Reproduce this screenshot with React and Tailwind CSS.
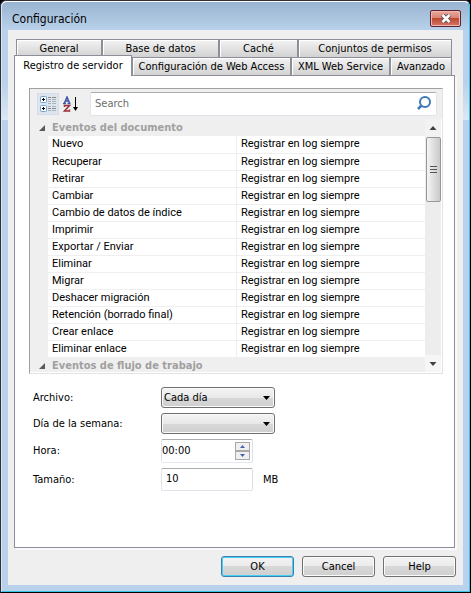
import { useState } from "react";

const TOP_TABS = ["General", "Base de datos", "Caché", "Conjuntos de permisos"];
const BOTTOM_TABS = ["Configuración de Web Access", "XML Web Service", "Avanzado"];

const EVENTS = [
  "Nuevo",
  "Recuperar",
  "Retirar",
  "Cambiar",
  "Cambio de datos de índice",
  "Imprimir",
  "Exportar / Enviar",
  "Eliminar",
  "Migrar",
  "Deshacer migración",
  "Retención (borrado final)",
  "Crear enlace",
  "Eliminar enlace",
];

function Tab({ children }) {
  return (
    <button
      type="button"
      role="tab"
      aria-selected="false"
      className="h-[18px] overflow-hidden whitespace-nowrap border-t border-r border-l border-[#8c8e98] bg-gradient-to-b from-[#f3f3f3] to-[#d2d2d2] text-center leading-[18px] shadow-[inset_1px_1px_0_#ffffff]"
    >
      {children}
    </button>
  );
}

function Category({ children }) {
  return (
    <tr className="h-[17px] bg-[#efefef]">
      <td className="p-0">
        <svg className="ml-2 h-2 w-2" viewBox="0 0 8 8">
          <path d="M7 1v6H1z" fill="#5a5a5a" />
        </svg>
      </td>
      <th
        colSpan={2}
        className="p-0 pl-1 text-left font-['DejaVu_Sans_Condensed',sans-serif] text-[11px] font-bold leading-4 text-[#a0a0a0]"
      >
        {children}
      </th>
    </tr>
  );
}

function DropDown({ id, children }) {
  return (
    <div className="relative w-[114px]">
      <select
        id={id}
        className="block h-[21px] w-full appearance-none rounded-[3px] border border-[#707070] bg-[linear-gradient(#f4f4f4,#e8e8e8_50%,#d8d8d8_50%,#cfcfcf)] pl-0.5 leading-4 shadow-[inset_0_0_0_1px_#fbfbfb]"
      >
        {children}
      </select>
      <svg className="pointer-events-none absolute top-[9px] right-[5px] h-1 w-[7px]" viewBox="0 0 7 4">
        <path d="M0 0h7L3.500 4z" fill="#000" />
      </svg>
    </div>
  );
}

function PushButton({ primary, children }) {
  return (
    <button
      type="button"
      className={`h-[21px] w-[73px] rounded-[3px] border bg-[linear-gradient(#f3f3f3,#ebebeb_50%,#d8d8d8_50%,#cfcfcf)] leading-4 ${
        primary
          ? "border-[#3c7fb1] shadow-[inset_0_0_0_1px_#46d0f5]"
          : "border-[#707070] shadow-[inset_0_0_0_1px_#fbfbfb]"
      }`}
    >
      {children}
    </button>
  );
}

export default function App() {
  const [search, setSearch] = useState("");
  const [time, setTime] = useState("00:00");
  const [size, setSize] = useState("10");

  return (
    <div className="min-h-screen bg-black font-['DejaVu_Sans_Condensed',sans-serif] text-[11px] text-black">
      <div className="flex min-h-screen flex-col rounded-t-md border border-t-[#30303a] border-r-black border-b-black border-l-[#30303a] bg-[#b9d1ea]">
        <div className="flex min-h-0 flex-1 flex-col rounded-t-md border-t border-r border-b border-l border-t-white border-r-[#35c7e8] border-b-[#35c7e8] border-l-[#d8e6f5] bg-[linear-gradient(#99b4d1,#b9d1ea_28px,#b9d1ea_80px,#dbe8f6_118px,#b9d1ea_118px)] px-1.5 pb-1.5">
          {/* Title bar */}
          <header className="flex h-7 items-center justify-between pt-1.5 pr-0.5 pl-1">
            <h1 className="text-[12px] leading-4">Configuración</h1>
            <button
              type="button"
              aria-label="Close"
              className="mb-0.5 flex h-[17px] w-[31px] items-center justify-center rounded-[2px] border border-[#5a2230] bg-[linear-gradient(#e8a99d,#d98475_45%,#bd4a30_50%,#d0766a)] shadow-[inset_0_0_0_1px_#f0b8b0]"
            >
              <svg className="h-[9px] w-3" viewBox="0 0 12 9">
                <path d="M2.500 1l7 7M9.500 1l-7 7" stroke="#5b5560" strokeWidth="4.500" />
                <path d="M2.500 1l7 7M9.500 1l-7 7" stroke="#fff" strokeWidth="2.500" />
              </svg>
            </button>
          </header>

          <main className="flex flex-1 flex-col bg-[#efefef] pt-[9px] pr-2 pb-2 pl-1.5">
            <div role="tablist" className="pr-[3px]">
              <div className="grid grid-cols-[86fr_117fr_79fr_154fr] pl-0.5">
                {TOP_TABS.map((t) => (
                  <Tab key={t}>{t}</Tab>
                ))}
              </div>
              <div className="grid grid-cols-[118fr_159fr_99fr_62fr]">
                <button
                  type="button"
                  role="tab"
                  aria-selected="true"
                  className="relative -mt-0.5 -mb-px whitespace-nowrap border-t border-r border-l border-[#8c8e98] bg-white leading-4"
                >
                  Registro de servidor
                </button>
                {BOTTOM_TABS.map((t) => (
                  <Tab key={t}>{t}</Tab>
                ))}
              </div>
            </div>

            <section className="flex-1 border border-[#8c8e98] bg-white pt-3 pr-[11px] pl-[14px] shadow-[2px_2px_0_#fafafa]">
              <div className="border border-t-[#a0a0a0] border-r-[#e3e3e3] border-b-[#e3e3e3] border-l-[#a0a0a0] bg-[#efefef]">
                <div className="flex h-[30px] items-center gap-1 pr-[5px] pl-[7px]">
                  <button
                    type="button"
                    aria-label="Categorized"
                    className="flex h-[22px] w-[22px] items-center justify-center border border-[#d5dde8] bg-[#dce4ee]"
                  >
                    <svg className="h-[18px] w-[18px]" viewBox="0 0 18 18">
                      <g fill="#fff" stroke="#6fa3d0">
                        <rect x="1.500" y="1.500" width="6" height="6" rx="1" />
                        <rect x="1.500" y="10.500" width="6" height="6" rx="1" />
                      </g>
                      <path d="M3 4.500h3M4.500 3v3M3 13.500h3M4.500 12v3" stroke="#000" />
                      <path d="M9 2.500h3M13 2.500h4M9 13.500h3M13 13.500h4" stroke="#888" />
                      <path
                        d="M9 4.500h3M13 4.500h4M9 6.500h3M13 6.500h4M9 8.500h3M13 8.500h4M9 11.500h3M13 11.500h4M9 15.500h3M13 15.500h4"
                        stroke="#a9b1bb"
                      />
                    </svg>
                  </button>
                  <button
                    type="button"
                    aria-label="Alphabetical"
                    className="flex h-[22px] w-[22px] items-center justify-start"
                  >
                    <svg className="h-4 w-4" viewBox="0 0 16 16">
                      <path d="M0 7.500h3M4.500 7.500h3M1.500 7L4 1l2.500 6M2.500 5h3" stroke="#3f56a0" strokeWidth="1.500" fill="none" />
                      <path d="M1.500 11V9.500h5L1.500 15h5v-1.500" stroke="#9c2f38" strokeWidth="1.500" fill="none" />
                      <path d="M12.500 1v13" stroke="#000" />
                      <path d="M10 11h5l-2.500 4z" fill="#000" />
                    </svg>
                  </button>
                  <label className="ml-px flex h-6 flex-1 items-center rounded-[2px] border border-t-[#abadb3] border-r-[#e2e3ea] border-b-[#e2e3ea] border-l-[#e2e3ea] bg-white pr-1 pl-1">
                    <input
                      type="text"
                      aria-label="Search"
                      placeholder="Search"
                      value={search}
                      onChange={(e) => setSearch(e.target.value)}
                      className="min-w-0 flex-1 text-[11px] leading-4 outline-none placeholder:text-[#6d6d6d]"
                    />
                    <svg className="h-4 w-4" viewBox="0 0 16 16" fill="none" stroke="#3f78b8">
                      <circle cx="9" cy="6" r="5" strokeWidth="2" />
                      <path d="M5.500 9.500L2 13" strokeWidth="2.500" />
                    </svg>
                  </label>
                </div>

                <div className="flex h-[254px] border-r border-b border-white">
                  <div className="min-w-0 flex-1 overflow-hidden">
                    <table className="w-full table-fixed border-collapse font-[Roboto,sans-serif] text-[11px] leading-4">
                      <colgroup>
                        <col className="w-[18px]" />
                        <col />
                        <col />
                      </colgroup>
                      <tbody>
                        <Category>Eventos del documento</Category>
                        {EVENTS.map((name) => (
                          <tr key={name} className="h-[17px]">
                            <td className="bg-[#efefef] p-0" />
                            <td className="whitespace-nowrap border-r border-b border-[#efefef] bg-white p-0 pl-1">
                              {name}
                            </td>
                            <td className="whitespace-nowrap border-b border-[#efefef] bg-white p-0 pl-1">
                              Registrar en log siempre
                            </td>
                          </tr>
                        ))}
                        <Category>Eventos de flujo de trabajo</Category>
                      </tbody>
                    </table>
                  </div>
                  {/* Scroll bar */}
                  <div className="flex w-4 flex-col items-center bg-[#ededed]">
                    <svg className="h-[18px] w-4 bg-[#f2f2f2]" viewBox="0 0 16 18">
                      <path d="M8 7l3.500 4h-7z" fill="#404040" />
                    </svg>
                    <div className="flex h-[65px] w-[15px] items-center justify-center rounded-[2px] border border-[#979797] bg-gradient-to-r from-[#f5f5f5] to-[#c9c9c9]">
                      <svg className="h-2 w-[7px]" viewBox="0 0 7 8">
                        <path d="M0 .5h7M0 3.500h7M0 6.500h7" stroke="#555" />
                      </svg>
                    </div>
                    <svg className="mt-auto h-[17px] w-4 bg-[#f6f6f6]" viewBox="0 0 16 17">
                      <path d="M8 11L4.500 7h7z" fill="#404040" />
                    </svg>
                  </div>
                </div>
              </div>

              <form className="grid grid-cols-[128px_1fr] items-center gap-y-[5px] pt-[13px] pl-1 leading-4">
                <label htmlFor="archive">Archivo:</label>
                <DropDown id="archive">
                  <option>Cada día</option>
                </DropDown>

                <label htmlFor="weekday">Día de la semana:</label>
                <DropDown id="weekday">
                  <option></option>
                </DropDown>

                <label htmlFor="time">Hora:</label>
                <div className="flex h-6 w-[92px] items-center rounded-[2px] border border-t-[#abadb3] border-r-[#dbdfe6] border-b-[#e3e9ef] border-l-[#e2e3ea] pr-0.5">
                  <input
                    id="time"
                    value={time}
                    onChange={(e) => setTime(e.target.value)}
                    className="min-w-0 flex-1 leading-4 outline-none"
                  />
                  <div className="flex flex-col">
                    <button
                      type="button"
                      aria-label="Up"
                      className="flex h-[9px] w-[15px] items-center justify-center border border-[#a9a9a9] bg-[#efefef]"
                    >
                      <svg className="h-[3px] w-[5px]" viewBox="0 0 5 3">
                        <path d="M2.500 0L5 3H0z" fill="#4960b0" />
                      </svg>
                    </button>
                    <button
                      type="button"
                      aria-label="Down"
                      className="flex h-[9px] w-[15px] items-center justify-center border border-[#a9a9a9] bg-[#efefef]"
                    >
                      <svg className="h-[3px] w-[5px]" viewBox="0 0 5 3">
                        <path d="M2.500 3L0 0h5z" fill="#4960b0" />
                      </svg>
                    </button>
                  </div>
                </div>

                <label htmlFor="size">Tamaño:</label>
                <div className="flex items-center gap-2.5">
                  <input
                    id="size"
                    value={size}
                    onChange={(e) => setSize(e.target.value)}
                    className="h-[23px] w-[92px] rounded-[2px] border border-t-[#abadb3] border-r-[#dbdfe6] border-b-[#e2e3ea] border-l-[#e2e3ea] pb-0.5 pl-1 leading-4 outline-none"
                  />
                  <span>MB</span>
                </div>
              </form>
            </section>

            <footer className="-mr-px flex justify-end gap-2 pt-2">
              <PushButton primary>OK</PushButton>
              <PushButton>Cancel</PushButton>
              <PushButton>Help</PushButton>
            </footer>
          </main>
        </div>
      </div>
    </div>
  );
}
